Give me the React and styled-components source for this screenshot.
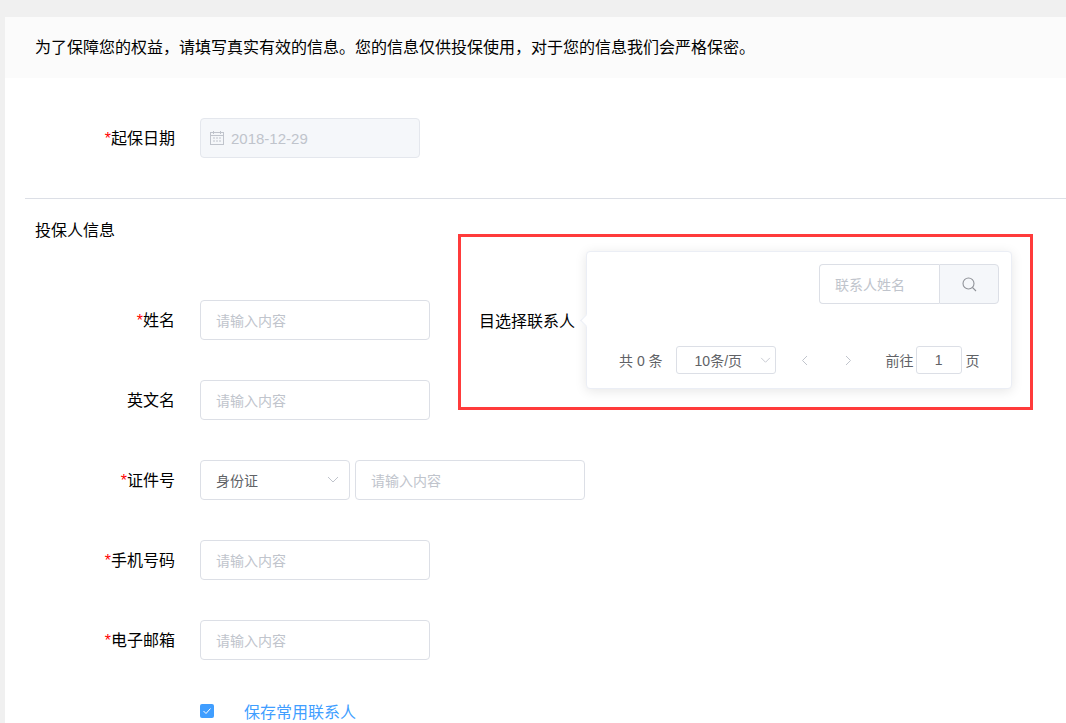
import React from 'react';
import styled, { createGlobalStyle } from 'styled-components';

const GlobalStyle = createGlobalStyle`
  html, body {
    margin: 0;
    padding: 0;
    height: 723px;
    overflow: hidden;
    background: #f0f0f0;
    font-family: "Liberation Sans", "Noto Sans CJK SC", sans-serif;
  }
  * { box-sizing: border-box; }
`;

const Page = styled.div`
  padding: 17px 0 0 5px;
  height: 723px;
  overflow: hidden;
`;

const Panel = styled.div`
  background: #fff;
  min-height: 800px;
`;

const Notice = styled.div`
  height: 61px;
  padding-left: 30px;
  background: #fbfbfb;
  color: #000;
  font-size: 16px;
  line-height: 61px;
`;

const DateSection = styled.div`
  height: 121px;
  padding-top: 40px;
  margin-left: 20px;
  border-bottom: 1px solid #dcdfe6;
`;

const SectionTitle = styled.div`
  margin: 21px 0 0 30px;
  height: 20px;
  font-size: 16px;
  line-height: 22px;
  color: #000;
`;

const Fields = styled.div`
  display: flex;
  flex-direction: column;
  gap: 40px;
  padding-top: 60px;
`;

const Row = styled.div`
  display: flex;
  align-items: center;
  height: 40px;
`;

const Label = styled.label`
  align-self: flex-start;
  width: ${(p) => p.$w || 170}px;
  height: 40px;
  text-align: right;
  font-size: 16px;
  line-height: 42px;
  color: #000;
  margin-right: 25px;
`;

const Star = styled.span`
  color: #f00;
`;

const Input = styled.div`
  width: ${(p) => p.$w || 230}px;
  height: 40px;
  padding-left: 15px;
  border: 1px solid #dcdfe6;
  border-radius: 4px;
  background: #fff;
  color: #c0c4cc;
  font-size: 14px;
  line-height: 40px;
`;

const DateInput = styled.div`
  display: flex;
  align-items: center;
  gap: 7px;
  width: 220px;
  height: 40px;
  padding-left: 9px;
  border: 1px solid #e4e7ed;
  border-radius: 4px;
  background: #f5f7fa;
  color: #c0c4cc;
  font-size: 15px;
`;

const SelectBox = styled(Input)`
  position: relative;
  width: 150px;
  margin-right: 5px;
  color: #606266;
`;

const Caret = styled.svg`
  position: absolute;
  right: 10px;
  top: 15px;
  width: 12px;
  height: 8px;
  fill: none;
  stroke: #c0c4cc;
  stroke-width: 1;
`;

const Trigger = styled.div`
  margin-left: 49px;
  font-size: 16px;
  color: #000;
`;

const Popover = styled.div`
  position: absolute;
  left: 586px;
  top: 251px;
  width: 426px;
  height: 138px;
  padding: 12px 12px 0 0;
  background: #fff;
  border: 1px solid #ebeef5;
  border-radius: 4px;
  box-shadow: 0 2px 12px 0 rgba(0, 0, 0, 0.1);

  &::before {
    content: '';
    position: absolute;
    left: -5px;
    top: 64px;
    width: 8px;
    height: 8px;
    background: #fff;
    border-left: 1px solid #ebeef5;
    border-bottom: 1px solid #ebeef5;
    transform: rotate(45deg);
  }
`;

const SearchGroup = styled.div`
  display: flex;
  justify-content: flex-end;
`;

const SearchInput = styled.div`
  width: 120px;
  height: 40px;
  padding-left: 15px;
  border: 1px solid #dcdfe6;
  border-right: 0;
  border-radius: 4px 0 0 4px;
  color: #c0c4cc;
  font-size: 14px;
  line-height: 40px;
`;

const SearchButton = styled.div`
  display: flex;
  align-items: center;
  justify-content: center;
  width: 60px;
  height: 40px;
  border: 1px solid #dcdfe6;
  border-radius: 0 4px 4px 0;
  background: #f5f7fa;
`;

const Pager = styled.div`
  display: flex;
  align-items: center;
  height: 28px;
  margin-top: 42px;
  padding-left: 32px;
  font-size: 14px;
  color: #606266;
`;

const PageSize = styled.div`
  position: relative;
  width: 100px;
  height: 28px;
  margin-left: 13px;
  padding-left: 18px;
  border: 1px solid #dcdfe6;
  border-radius: 3px;
  line-height: 28px;
`;

const SmallCaret = styled(Caret)`
  right: 4px;
  top: 10px;
  width: 11px;
  height: 7px;
`;

const Arrow = styled.svg`
  width: 7px;
  height: 11px;
  margin-left: ${(p) => p.$gap}px;
  fill: none;
  stroke: #c0c4cc;
  stroke-width: 1;
`;

const PageInput = styled.div`
  width: 46px;
  height: 28px;
  margin: 0 4px 0 2px;
  border: 1px solid #dcdfe6;
  border-radius: 3px;
  text-align: center;
  line-height: 26px;
`;

const GoLabel = styled.span`
  margin-left: 34px;
`;

const CheckRow = styled.div`
  display: flex;
  align-items: center;
  margin: 41px 0 0 195px;
  height: 20px;
`;

const CheckBox = styled.div`
  display: flex;
  align-items: center;
  justify-content: center;
  width: 14px;
  height: 14px;
  border-radius: 2px;
  background: #409eff;
`;

const CheckLabel = styled.span`
  margin-left: 30px;
  font-size: 16px;
  color: #409eff;
`;

const Highlight = styled.div`
  position: absolute;
  left: 458px;
  top: 234px;
  width: 575px;
  height: 176px;
  border: 3px solid #ff3b3b;
  pointer-events: none;
`;

const CalendarIcon = () => (
  <svg width="14" height="14" viewBox="0 0 14 14" fill="none" stroke="#c0c4cc" strokeWidth="1">
    <rect x="0.5" y="1.5" width="13" height="12" />
    <path d="M0.5 4.5h13M3.5 0v3M10.5 0v3" />
    <path d="M3 7h2M6 7h2M9 7h2M3 10h2M6 10h2M9 10h2" />
  </svg>
);

const SearchIcon = () => (
  <svg width="15" height="15" viewBox="0 0 15 15" fill="none" stroke="#909399" strokeWidth="1.1">
    <circle cx="6.5" cy="6.5" r="5.5" />
    <path d="M10.5 10.5l3.5 3.5" />
  </svg>
);

const DownPath = () => <path d="M1 1l5 5 5-5" />;

const FormRow = ({ label, required, placeholder = '请输入内容' }) => (
  <Row>
    <Label>
      {required && <Star>*</Star>}
      {label}
    </Label>
    <Input>{placeholder}</Input>
  </Row>
);

export default function App() {
  return (
    <Page>
      <GlobalStyle />
      <Panel>
        <Notice>为了保障您的权益，请填写真实有效的信息。您的信息仅供投保使用，对于您的信息我们会严格保密。</Notice>
        <DateSection>
          <Row>
            <Label $w={150}>
              <Star>*</Star>起保日期
            </Label>
            <DateInput>
              <CalendarIcon />
              2018-12-29
            </DateInput>
          </Row>
        </DateSection>
        <SectionTitle>投保人信息</SectionTitle>
        <Fields>
          <Row>
            <Label>
              <Star>*</Star>姓名
            </Label>
            <Input>请输入内容</Input>
            <Trigger>目选择联系人</Trigger>
          </Row>
          <FormRow label="英文名" />
          <Row>
            <Label>
              <Star>*</Star>证件号
            </Label>
            <SelectBox>
              身份证
              <Caret viewBox="0 0 12 8">
                <DownPath />
              </Caret>
            </SelectBox>
            <Input>请输入内容</Input>
          </Row>
          <FormRow label="手机号码" required />
          <FormRow label="电子邮箱" required />
        </Fields>
        <CheckRow>
          <CheckBox>
            <svg width="10" height="8" viewBox="0 0 10 8" fill="none" stroke="#fff" strokeWidth="1">
              <path d="M1.5 4l2.5 2.5L8.5 1.5" />
            </svg>
          </CheckBox>
          <CheckLabel>保存常用联系人</CheckLabel>
        </CheckRow>
      </Panel>
      <Popover>
        <SearchGroup>
          <SearchInput>联系人姓名</SearchInput>
          <SearchButton>
            <SearchIcon />
          </SearchButton>
        </SearchGroup>
        <Pager>
          共 0 条
          <PageSize>
            10条/页
            <SmallCaret viewBox="0 0 12 8">
              <DownPath />
            </SmallCaret>
          </PageSize>
          <Arrow $gap={25} viewBox="0 0 7 11">
            <path d="M6 1L1.5 5.5 6 10" />
          </Arrow>
          <Arrow $gap={37} viewBox="0 0 7 11">
            <path d="M1 1l4.5 4.5L1 10" />
          </Arrow>
          <GoLabel>前往</GoLabel>
          <PageInput>1</PageInput>页
        </Pager>
      </Popover>
      <Highlight />
    </Page>
  );
}
